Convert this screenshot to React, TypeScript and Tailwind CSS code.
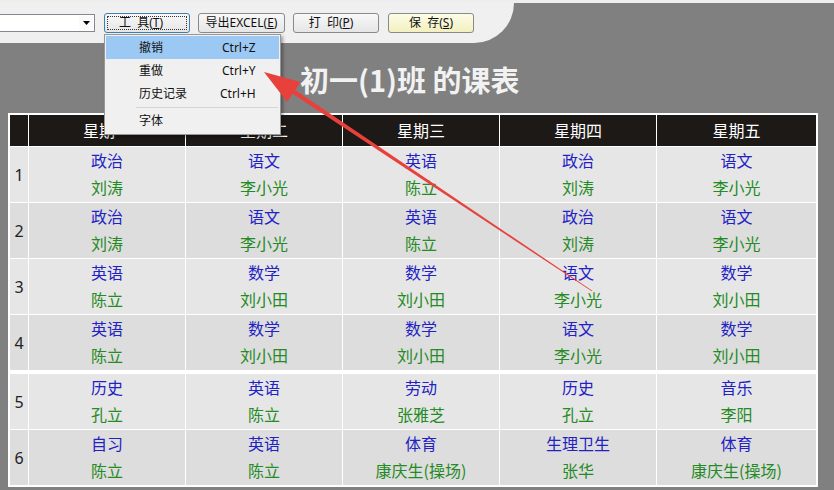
const days = ["星期一", "星期二", "星期三", "星期四", "星期五"];

const rows: string[][][] = [
  [["政治", "刘涛"], ["语文", "李小光"], ["英语", "陈立"], ["政治", "刘涛"], ["语文", "李小光"]],
  [["政治", "刘涛"], ["语文", "李小光"], ["英语", "陈立"], ["政治", "刘涛"], ["语文", "李小光"]],
  [["英语", "陈立"], ["数学", "刘小田"], ["数学", "刘小田"], ["语文", "李小光"], ["数学", "刘小田"]],
  [["英语", "陈立"], ["数学", "刘小田"], ["数学", "刘小田"], ["语文", "李小光"], ["数学", "刘小田"]],
  [["历史", "孔立"], ["英语", "陈立"], ["劳动", "张雅芝"], ["历史", "孔立"], ["音乐", "李阳"]],
  [["自习", "陈立"], ["英语", "陈立"], ["体育", "康庆生(操场)"], ["生理卫生", "张华"], ["体育", "康庆生(操场)"]],
];

const menuItems = [
  { label: "撤销", key: "Ctrl+Z", active: true },
  { label: "重做", key: "Ctrl+Y" },
  { label: "历史记录", key: "Ctrl+H" },
];

function ToolButton({
  children,
  tone = "plain",
  focused = false,
  extra = "",
}: {
  children: React.ReactNode;
  tone?: "plain" | "yellow";
  focused?: boolean;
  extra?: string;
}) {
  const bg =
    tone === "yellow"
      ? "bg-gradient-to-b from-[#fdfde8] to-[#f2f0bf]"
      : "bg-gradient-to-b from-[#f8f8f8] to-[#e6e6e6]";
  return (
    <button
      className={
        "relative w-[86px] h-[20px] rounded-[3px] border text-[12px] leading-[18px] text-[#111] flex items-center justify-center whitespace-pre " +
        bg +
        " " +
        (focused ? "border-[#3c7fb1]" : "border-[#8a8a8a]") +
        " " +
        extra
      }
    >
      {focused && (
        <span className="absolute inset-[2px] border border-dotted border-[#333] rounded-[1px]" />
      )}
      {children}
    </button>
  );
}

export default function App() {
  return (
    <div className="relative w-[834px] h-[490px] overflow-hidden bg-[#808080] font-['Noto_Sans','Noto_Sans_CJK_SC',sans-serif]">
      {/* top strip */}
      <div className="h-[3px] bg-[#eeeeee]" />

      {/* toolbar panel */}
      <div className="w-[514px] h-[40px] bg-[#f0f0f0] rounded-br-[40px] flex items-center">
        <div className="ml-[-2px] w-[97px] h-[18px] bg-white border border-[#828790] flex justify-end items-center mr-[9px]">
          <div className="w-[14px] h-[14px] mr-[1px] flex items-center justify-center bg-[#fafafa]">
            <svg width="7" height="4" viewBox="0 0 7 4">
              <path d="M0 0h7L3.5 4z" fill="#000" />
            </svg>
          </div>
        </div>
        <div className="flex gap-[8px]">
          <ToolButton focused extra="pr-[12px]">
            工  具(<span className="underline">T</span>)
          </ToolButton>
          <ToolButton extra="w-[87px]">
            导出EXCEL(<span className="underline">E</span>)
          </ToolButton>
          <ToolButton extra="pr-[10px]">
            打  印(<span className="underline">P</span>)
          </ToolButton>
          <ToolButton tone="yellow" extra="w-[85px] ml-[1px]">
            保  存(<span className="underline">S</span>)
          </ToolButton>
        </div>
      </div>

      {/* title */}
      <div className="h-[70px] pt-[17px] pl-[300px]">
        <h1 className="text-[29px] leading-[38px] font-bold text-[#f2f2f2] font-['Noto_Sans_CJK_SC',sans-serif]">
          初一(1)班 的课表
        </h1>
      </div>

      {/* timetable */}
      <div className="ml-[8px] w-[810px] bg-white p-[2px] flex flex-col gap-px">
        <div className="grid grid-cols-[18px_156px_156px_156px_156px_159px] gap-px h-[31px]">
          <div className="bg-[#1d1917]" />
          {days.map((d) => (
            <div
              key={d}
              className="bg-[#1d1917] text-white text-[16px] leading-[31px] text-center font-['Noto_Sans_CJK_SC',sans-serif]"
            >
              {d}
            </div>
          ))}
        </div>

        {rows.map((row, i) => {
          const bg = i % 2 === 0 ? "bg-[#e6e6e6]" : "bg-[#dddddd]";
          return (
            <div
              key={i}
              className={
                "grid grid-cols-[18px_156px_156px_156px_156px_159px] gap-px h-[55px] " +
                (i === 4 ? "mt-[3px]" : "")
              }
            >
              <div className={bg + " flex items-center justify-center text-[16px] text-[#222]"}>
                {i + 1}
              </div>
              {row.map(([subject, teacher], j) => (
                <div
                  key={j}
                  className={
                    bg +
                    " flex flex-col items-center justify-center pb-[1px] text-[16px] leading-[27px] font-['Noto_Sans_CJK_SC',sans-serif]"
                  }
                >
                  <span className="text-[#2222c4]">{subject}</span>
                  <span className="text-[#248a24]">{teacher}</span>
                </div>
              ))}
            </div>
          );
        })}
      </div>

      {/* dropdown menu */}
      <div className="absolute left-[104px] top-[34px] w-[177px] h-[101px] bg-[#f0f0f0] border border-[#979797] shadow-[2px_2px_3px_rgba(0,0,0,0.35)] pt-[1px] px-px text-[12px] text-[#111]">
        {menuItems.map((m) => (
          <div
            key={m.label}
            className={
              "h-[23px] flex items-center " + (m.active ? "bg-[#9cc9f3]" : "")
            }
          >
            <span className="pl-[33px] w-[116px]">{m.label}</span>
            <span className={m.key === "Ctrl+H" ? "-ml-[2px]" : ""}>{m.key}</span>
          </div>
        ))}
        <div className="h-[5px] flex items-center">
          <div className="ml-[30px] mr-px flex-1 h-px bg-[#d5d5d5]" />
        </div>
        <div className="h-[22px] flex items-center">
          <span className="pl-[33px]">字体</span>
        </div>
      </div>

      {/* red annotation arrow */}
      <svg
        className="absolute inset-0 pointer-events-none"
        width="834"
        height="490"
        viewBox="0 0 834 490"
      >
        <polygon
          points="295.5,90.3 292.6,93.8 591.8,291.3 592.3,290.7"
          fill="#e8403b"
        />
        <polygon points="264,72 300.6,82 287.2,102" fill="#e8403b" />
      </svg>
    </div>
  );
}
